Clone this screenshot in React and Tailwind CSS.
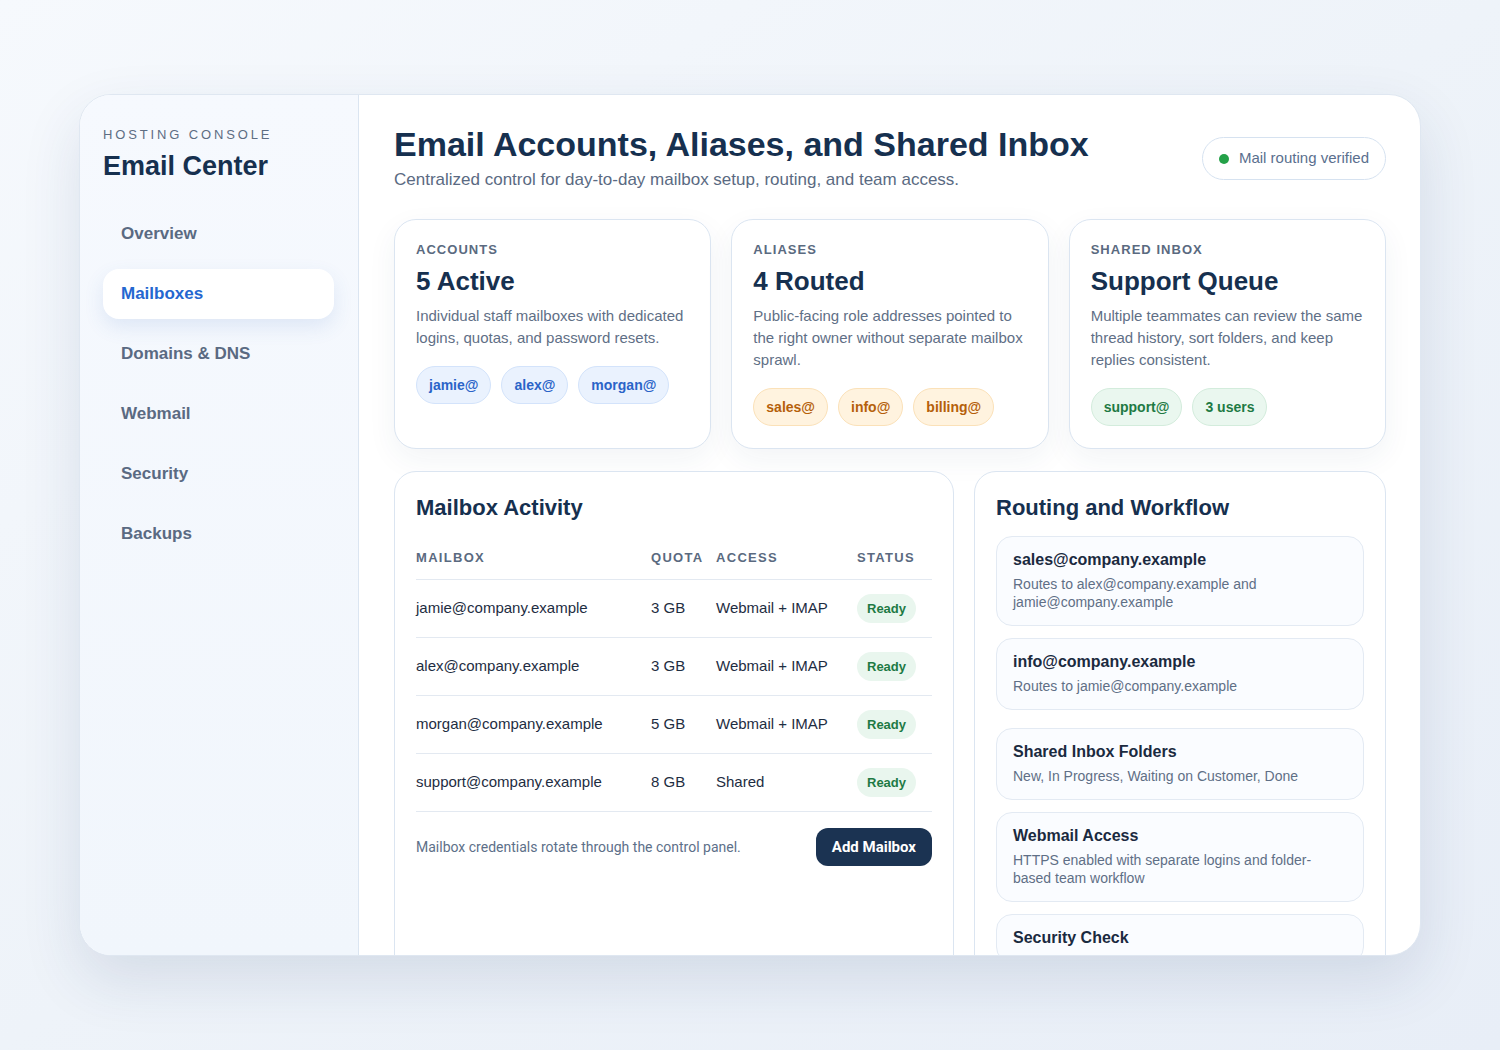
import React from "react";

const nav = ["Overview", "Mailboxes", "Domains & DNS", "Webmail", "Security", "Backups"];

const chipStyles = {
  blue: "bg-[#eaf2fe] border-[#d3e3fb] text-[#2a64c8]",
  orange: "bg-[#fff3df] border-[#fbe1b8] text-[#b5600a]",
  green: "bg-[#eaf7ef] border-[#d3ecdc] text-[#1e7a44]",
};

const stats = [
  {
    label: "ACCOUNTS",
    title: "5 Active",
    desc: "Individual staff mailboxes with dedicated logins, quotas, and password resets.",
    chips: ["jamie@", "alex@", "morgan@"],
    color: "blue",
  },
  {
    label: "ALIASES",
    title: "4 Routed",
    desc: "Public-facing role addresses pointed to the right owner without separate mailbox sprawl.",
    chips: ["sales@", "info@", "billing@"],
    color: "orange",
  },
  {
    label: "SHARED INBOX",
    title: "Support Queue",
    desc: "Multiple teammates can review the same thread history, sort folders, and keep replies consistent.",
    chips: ["support@", "3 users"],
    color: "green",
  },
];

const rows = [
  ["jamie@company.example", "3 GB", "Webmail + IMAP"],
  ["alex@company.example", "3 GB", "Webmail + IMAP"],
  ["morgan@company.example", "5 GB", "Webmail + IMAP"],
  ["support@company.example", "8 GB", "Shared"],
];

const routes = [
  ["sales@company.example", "Routes to alex@company.example and jamie@company.example", ""],
  ["info@company.example", "Routes to jamie@company.example", "mt-3"],
  ["Shared Inbox Folders", "New, In Progress, Waiting on Customer, Done", "mt-[18px]"],
  ["Webmail Access", "HTTPS enabled with separate logins and folder-based team workflow", "mt-3"],
  ["Security Check", null, "mt-3"],
];

export default function App() {
  return (
    <div
      className="w-[1500px] h-[1050px] bg-gradient-to-br from-[#f6f9fd] via-[#eef3f9] to-[#e8eef7] pt-[94px] pl-[79px]"
      style={{ fontFamily: '"Liberation Sans", Arial, sans-serif' }}
    >
      <div className="w-[1342px] h-[862px] rounded-[32px] bg-white border border-[#dfe7f1] shadow-[0_24px_60px_rgba(30,60,110,0.12)] overflow-hidden flex">
        {/* Sidebar */}
        <aside className="w-[279px] shrink-0 bg-gradient-to-b from-[#f6f9fe] to-[#f1f6fc] border-r border-[#dbe5f1] pl-[23px] pr-[24px] pt-[32px]">
          <div className="text-[13px] tracking-[0.22em] text-[#5d6d83] leading-4">HOSTING CONSOLE</div>
          <div className="text-[27px] font-bold text-[#16304f] mt-[7px] leading-8">Email Center</div>
          <nav className="mt-[27px] flex flex-col gap-[10px] w-[231px]">
            {nav.map((n) => (
              <div
                key={n}
                className={
                  "h-[50px] rounded-[16px] px-[18px] flex items-center text-[17px] font-bold " +
                  (n === "Mailboxes"
                    ? "bg-white text-[#2467d0] shadow-[0_8px_20px_rgba(60,110,190,0.12)]"
                    : "text-[#5a6a82]")
                }
              >
                {n}
              </div>
            ))}
          </nav>
        </aside>

        {/* Main */}
        <main className="flex-1 pl-[35px] pr-[34px] pt-[30px]">
          <div className="flex items-center justify-between">
            <div>
              <h1 className="text-[34px] font-bold text-[#16304f] leading-[38px]">
                Email Accounts, Aliases, and Shared Inbox
              </h1>
              <p className="text-[17px] text-[#5a6a82] mt-[5px] leading-6">
                Centralized control for day-to-day mailbox setup, routing, and team access.
              </p>
            </div>
            <div className="h-[43px] px-[16px] rounded-full border border-[#d6e2f0] bg-white flex items-center gap-[10px] text-[15px] text-[#5a6f8e]">
              <span className="w-[10px] h-[10px] rounded-full bg-[#24a148]"></span>
              Mail routing verified
            </div>
          </div>

          <div className="grid grid-cols-3 gap-[20px] mt-[27px]">
            {stats.map((s) => (
              <div
                key={s.label}
                className="h-[230px] rounded-[22px] border border-[#dbe5f1] bg-white shadow-[0_10px_30px_rgba(30,60,110,0.06)] px-[21px] pt-[22px]"
              >
                <div className="text-[13px] font-bold tracking-[0.08em] text-[#5a6a80] leading-4">{s.label}</div>
                <div className="text-[26px] font-bold text-[#16304f] mt-[7px] leading-8">{s.title}</div>
                <p className="text-[15px] leading-[22px] text-[#5f6f86] mt-[8px]">{s.desc}</p>
                <div className="flex gap-[10px] mt-[17px]">
                  {s.chips.map((c) => (
                    <span
                      key={c}
                      className={
                        "h-[38px] px-[12px] rounded-full border flex items-center text-[14px] font-bold " +
                        chipStyles[s.color]
                      }
                    >
                      {c}
                    </span>
                  ))}
                </div>
              </div>
            ))}
          </div>

          <div className="flex gap-[20px] mt-[22px]">
            <div className="w-[560px] h-[520px] shrink-0 rounded-[22px] border border-[#dbe5f1] bg-white px-[21px] pt-[22px]">
              <h2 className="text-[22px] font-bold text-[#16304f] leading-7">Mailbox Activity</h2>
              <div className="mt-[15px]">
                <div className="grid grid-cols-[235px_65px_141px_1fr] h-[43px] items-center border-b border-[#e3e9f1] text-[13px] font-bold tracking-[0.1em] text-[#5a6a80]">
                  <div>MAILBOX</div>
                  <div>QUOTA</div>
                  <div>ACCESS</div>
                  <div>STATUS</div>
                </div>
                {rows.map((r) => (
                  <div
                    key={r[0]}
                    className="grid grid-cols-[235px_65px_141px_1fr] h-[58px] items-center border-b border-[#e3e9f1] text-[15px] text-[#1e2d42]"
                  >
                    <div>{r[0]}</div>
                    <div>{r[1]}</div>
                    <div>{r[2]}</div>
                    <div>
                      <span className="inline-flex items-center h-[29px] px-[10px] rounded-full bg-[#e9f6ee] text-[13px] font-bold text-[#1e7a44]">
                        Ready
                      </span>
                    </div>
                  </div>
                ))}
                <div className="flex items-center justify-between mt-[16px]">
                  <span className="text-[14px] text-[#5d7089]" style={{ fontFamily: "Roboto, sans-serif" }}>
                    Mailbox credentials rotate through the control panel.
                  </span>
                  <button
                    className="h-[38px] px-[16px] rounded-[12px] bg-[#1b3352] text-white text-[15px] font-bold"
                    style={{ fontFamily: "Roboto, sans-serif" }}
                  >
                    Add Mailbox
                  </button>
                </div>
              </div>
            </div>

            <div className="flex-1 h-[520px] rounded-[22px] border border-[#dbe5f1] bg-white px-[21px] pt-[22px]">
              <h2 className="text-[22px] font-bold text-[#16304f] leading-7">Routing and Workflow</h2>
              <div className="mt-[14px] flex flex-col">
                {routes.map((r) => (
                  <div
                    key={r[0]}
                    className={"rounded-[16px] border border-[#e3eaf3] bg-[#fafcff] px-[16px] pt-[13px] pb-[14px] " + r[2]}
                  >
                    <div className="text-[16px] font-bold text-[#1a2a40] leading-5">{r[0]}</div>
                    {r[1] && <div className="text-[14px] text-[#5f6f86] leading-[18px] mt-[5px]">{r[1]}</div>}
                  </div>
                ))}
              </div>
            </div>
          </div>
        </main>
      </div>
    </div>
  );
}
